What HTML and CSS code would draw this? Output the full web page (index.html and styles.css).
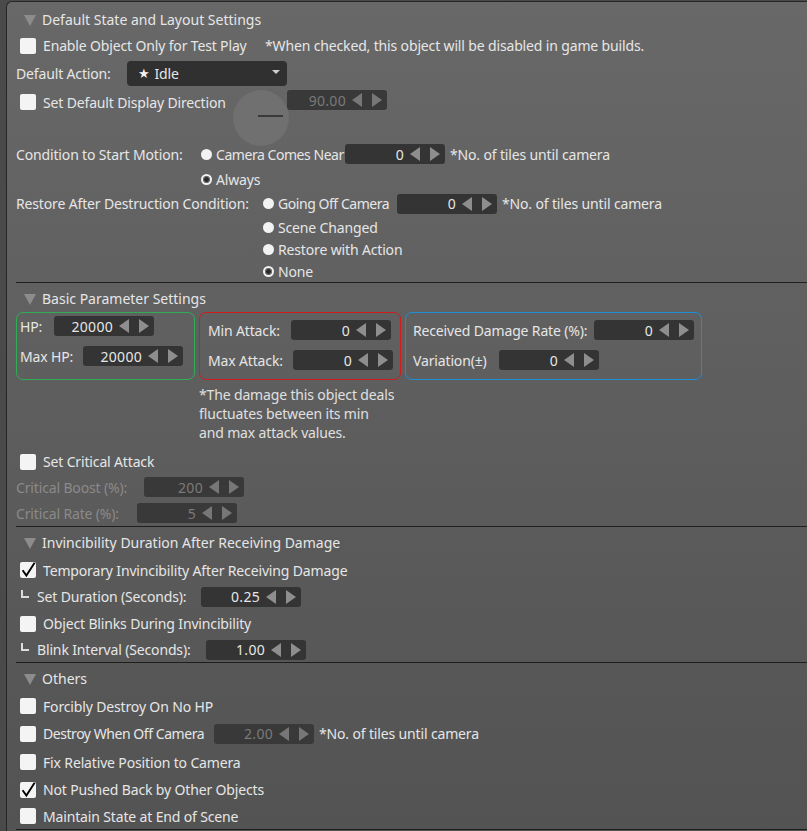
FILE: index.html
```html
<!DOCTYPE html>
<html>
<head>
<meta charset="utf-8">
<title>Object Settings</title>
<link rel="stylesheet" href="styles.css">
</head>
<body>
<div class="panel">

  <section class="sec">
    <div class="head"><span class="tri"></span>Default State and Layout Settings</div>

    <div class="row h23">
      <div class="chk w249"><span class="cb"></span>Enable Object Only for Test Play</div>
      <span>*When checked, this object will be disabled in game builds.</span>
    </div>

    <div class="row h32">
      <div class="lbl w111">Default Action:</div>
      <div class="select"><span class="star">★</span><span>Idle</span><span class="caret"></span></div>
    </div>

    <div class="row dir">
      <div class="chk w217 h26"><span class="cb"></span>Set Default Display Direction</div>
      <div class="dial"></div>
      <div class="spin off dir-spin"><span class="val">90.00</span><svg width="30" height="14" viewBox="0 0 30 14"><polygon points="10,0 10,14 0,7"/><polygon points="20,0 20,14 30,7"/></svg></div>
    </div>

    <div class="choice">
      <div class="lbl w185 h26">Condition to Start Motion:</div>
      <div class="opts">
        <div class="opt h26"><span class="radio"></span><span class="lbl w129 tight">Camera Comes Near</span><div class="spin"><span class="val">0</span><svg width="30" height="14" viewBox="0 0 30 14"><polygon points="10,0 10,14 0,7"/><polygon points="20,0 20,14 30,7"/></svg></div><span class="after">*No. of tiles until camera</span></div>
        <div class="opt h24"><span class="radio on"></span>Always</div>
      </div>
    </div>

    <div class="choice">
      <div class="lbl w247 h25">Restore After Destruction Condition:</div>
      <div class="opts">
        <div class="opt h25"><span class="radio"></span><span class="lbl w119 tight">Going Off Camera</span><div class="spin"><span class="val">0</span><svg width="30" height="14" viewBox="0 0 30 14"><polygon points="10,0 10,14 0,7"/><polygon points="20,0 20,14 30,7"/></svg></div><span class="after">*No. of tiles until camera</span></div>
        <div class="opt h22"><span class="radio"></span>Scene Changed</div>
        <div class="opt h22"><span class="radio"></span>Restore with Action</div>
        <div class="opt h22"><span class="radio on"></span>None</div>
      </div>
    </div>
  </section>
  <div class="sep"></div>

  <section class="sec">
    <div class="head"><span class="tri"></span>Basic Parameter Settings</div>

    <div class="groups">
      <div class="group green">
        <div class="grow"><span class="lbl w34">HP:</span><div class="spin"><span class="val">20000</span><svg width="30" height="14" viewBox="0 0 30 14"><polygon points="10,0 10,14 0,7"/><polygon points="20,0 20,14 30,7"/></svg></div></div>
        <div class="grow"><span class="lbl w63">Max HP:</span><div class="spin"><span class="val">20000</span><svg width="30" height="14" viewBox="0 0 30 14"><polygon points="10,0 10,14 0,7"/><polygon points="20,0 20,14 30,7"/></svg></div></div>
      </div>
      <div class="group red">
        <div class="grow"><span class="lbl w83">Min Attack:</span><div class="spin"><span class="val">0</span><svg width="30" height="14" viewBox="0 0 30 14"><polygon points="10,0 10,14 0,7"/><polygon points="20,0 20,14 30,7"/></svg></div></div>
        <div class="grow"><span class="lbl w85">Max Attack:</span><div class="spin"><span class="val">0</span><svg width="30" height="14" viewBox="0 0 30 14"><polygon points="10,0 10,14 0,7"/><polygon points="20,0 20,14 30,7"/></svg></div></div>
      </div>
      <div class="group blue">
        <div class="grow"><span class="lbl w181">Received Damage Rate (%):</span><div class="spin"><span class="val">0</span><svg width="30" height="14" viewBox="0 0 30 14"><polygon points="10,0 10,14 0,7"/><polygon points="20,0 20,14 30,7"/></svg></div></div>
        <div class="grow"><span class="lbl w86">Variation(±)</span><div class="spin"><span class="val">0</span><svg width="30" height="14" viewBox="0 0 30 14"><polygon points="10,0 10,14 0,7"/><polygon points="20,0 20,14 30,7"/></svg></div></div>
      </div>
    </div>

    <p class="note">*The damage this object deals<br>fluctuates between its min<br>and max attack values.</p>

    <div class="row h25">
      <div class="chk"><span class="cb"></span>Set Critical Attack</div>
    </div>
    <div class="row h26 disabled">
      <span class="lbl w128">Critical Boost (%):</span>
      <div class="spin off"><span class="val">200</span><svg width="30" height="14" viewBox="0 0 30 14"><polygon points="10,0 10,14 0,7"/><polygon points="20,0 20,14 30,7"/></svg></div>
    </div>
    <div class="row h26 disabled">
      <span class="lbl w121">Critical Rate (%):</span>
      <div class="spin off"><span class="val">5</span><svg width="30" height="14" viewBox="0 0 30 14"><polygon points="10,0 10,14 0,7"/><polygon points="20,0 20,14 30,7"/></svg></div>
    </div>
  </section>
  <div class="sep"></div>

  <section class="sec">
    <div class="head"><span class="tri"></span>Invincibility Duration After Receiving Damage</div>

    <div class="row h26">
      <div class="chk"><span class="cb"><svg width="16" height="16" viewBox="0 0 16 16"><path d="M2.6 8.2 L6.4 13.6 L14.6 0.8"/></svg></span>Temporary Invincibility After Receiving Damage</div>
    </div>
    <div class="row h27">
      <span class="lbl w185"><span class="corner"></span>Set Duration (Seconds):</span>
      <div class="spin"><span class="val">0.25</span><svg width="30" height="14" viewBox="0 0 30 14"><polygon points="10,0 10,14 0,7"/><polygon points="20,0 20,14 30,7"/></svg></div>
    </div>
    <div class="row h27">
      <div class="chk"><span class="cb"></span>Object Blinks During Invincibility</div>
    </div>
    <div class="row h25">
      <span class="lbl w190"><span class="corner"></span>Blink Interval (Seconds):</span>
      <div class="spin"><span class="val">1.00</span><svg width="30" height="14" viewBox="0 0 30 14"><polygon points="10,0 10,14 0,7"/><polygon points="20,0 20,14 30,7"/></svg></div>
    </div>
  </section>
  <div class="sep"></div>

  <section class="sec">
    <div class="head"><span class="tri"></span>Others</div>

    <div class="row h26">
      <div class="chk"><span class="cb"></span>Forcibly Destroy On No HP</div>
    </div>
    <div class="row h29">
      <div class="chk w198 tight"><span class="cb"></span>Destroy When Off Camera</div>
      <div class="spin off"><span class="val">2.00</span><svg width="30" height="14" viewBox="0 0 30 14"><polygon points="10,0 10,14 0,7"/><polygon points="20,0 20,14 30,7"/></svg></div>
      <span class="after">*No. of tiles until camera</span>
    </div>
    <div class="row h28">
      <div class="chk"><span class="cb"></span>Fix Relative Position to Camera</div>
    </div>
    <div class="row h27">
      <div class="chk"><span class="cb"><svg width="16" height="16" viewBox="0 0 16 16"><path d="M2.6 8.2 L6.4 13.6 L14.6 0.8"/></svg></span>Not Pushed Back by Other Objects</div>
    </div>
    <div class="row h26">
      <div class="chk"><span class="cb"></span>Maintain State at End of Scene</div>
    </div>
  </section>
  <div class="sep"></div>

</div>
</body>
</html>
```

FILE: styles.css
```css
html, body {
  margin: 0;
  padding: 0;
}

body {
  width: 807px;
  height: 831px;
  overflow: hidden;
  background: #4a4a4a;
  font-family: "Noto Sans", "Open Sans", "DejaVu Sans", sans-serif;
  font-size: 14px;
  letter-spacing: -0.15px;
  color: #e6e6e6;
}

.panel {
  box-sizing: border-box;
  margin: 1px 0 0 6px;
  height: 830px;
  padding: 2px 0 0 9px;
  border-top: 1px solid #262626;
  border-left: 1px solid #262626;
  border-top-left-radius: 6px;
  background: linear-gradient(#686868, #535353);
}

.head {
  height: 30px;
  display: flex;
  align-items: center;
  padding-left: 8px;
  white-space: nowrap;
  letter-spacing: 0;
}

.tri {
  width: 0;
  height: 0;
  border-left: 6px solid transparent;
  border-right: 6px solid transparent;
  border-top: 11px solid #8c8c8c;
  margin: 2px 6px 0 0;
}

.sep {
  height: 1px;
  background: #1e1e1e;
}

.row {
  display: flex;
  align-items: center;
  white-space: nowrap;
}

.h22 { height: 22px; }
.h23 { height: 23px; }
.h24 { height: 24px; }
.h25 { height: 25px; }
.h26 { height: 26px; }
.h27 { height: 27px; }
.h28 { height: 28px; }
.h29 { height: 29px; }
.h32 { height: 32px; }

.w34 { min-width: 34px; }
.w63 { min-width: 63px; }
.w83 { min-width: 83px; }
.w85 { min-width: 85px; }
.w86 { min-width: 86px; }
.w111 { min-width: 111px; }
.w119 { min-width: 119px; }
.w121 { min-width: 121px; }
.w128 { min-width: 128px; }
.w129 { min-width: 129px; }
.w181 { min-width: 181px; }
.w185 { min-width: 185px; }
.w190 { min-width: 190px; }
.w198 { min-width: 198px; }
.w217 { min-width: 217px; }
.w247 { min-width: 247px; }
.w249 { min-width: 249px; }

.tight {
  letter-spacing: -0.45px;
}

.lbl {
  display: flex;
  align-items: center;
  flex: none;
  white-space: nowrap;
}

.chk {
  display: flex;
  align-items: center;
  flex: none;
  white-space: nowrap;
}

.cb {
  width: 16px;
  height: 16px;
  flex: none;
  background: #f4f4f4;
  border-radius: 2px;
  margin: 0 7px 0 4px;
}

.cb svg {
  display: block;
  overflow: visible;
}

.cb path {
  fill: none;
  stroke: #000;
  stroke-width: 1.9;
  stroke-linejoin: miter;
}

.radio {
  width: 11px;
  height: 11px;
  flex: none;
  border-radius: 50%;
  background: #f2f2f2;
  margin-right: 4px;
}

.radio.on {
  background: radial-gradient(circle, #2a2a2a 0 2px, #6e6e6e 2.6px 3.4px, #f2f2f2 4px);
}

.select {
  box-sizing: border-box;
  width: 160px;
  height: 25px;
  display: flex;
  align-items: center;
  padding: 0 7px 0 11px;
  background: #303030;
  border-radius: 4px;
}

.star {
  font-family: "DejaVu Sans", sans-serif;
  font-size: 13px;
  margin-right: 5px;
  color: #f2f2f2;
}

.caret {
  margin-left: auto;
  width: 0;
  height: 0;
  border-left: 4px solid transparent;
  border-right: 4px solid transparent;
  border-top: 4px solid #d0d0d0;
  margin-top: -2px;
}

.spin {
  width: 100px;
  height: 20px;
  flex: none;
  display: flex;
  align-items: center;
  background: #343434;
  border-radius: 3px;
  letter-spacing: 0.3px;
}

.spin .val {
  width: 59px;
  text-align: right;
}

.spin svg {
  display: block;
  margin-left: 6px;
  fill: #8e8e8e;
}

.spin.off {
  background: #393939;
}

.spin.off .val {
  color: #7a7a7a;
}

.spin.off svg {
  fill: #777;
}

.dir {
  height: 52px;
  align-items: flex-start;
}

.dial {
  position: relative;
  width: 56px;
  height: 56px;
  flex: none;
  margin-top: 1px;
  border-radius: 50%;
  background: #707070;
}

.dial::after {
  content: "";
  position: absolute;
  left: 25px;
  top: 25px;
  width: 25px;
  height: 2px;
  background: #3a3a3a;
}

.dir-spin {
  margin: 1px 0 0 -2px;
}

.choice {
  display: flex;
  align-items: flex-start;
  white-space: nowrap;
}

.opts {
  display: flex;
  flex-direction: column;
}

.opt {
  display: flex;
  align-items: center;
}

.after {
  margin-left: 5px;
}

.groups {
  display: flex;
  gap: 4px;
  margin-top: -1px;
}

.group {
  box-sizing: border-box;
  height: 68px;
  border: 1px solid;
  border-radius: 7px;
  display: flex;
  flex-direction: column;
  gap: 10px;
  white-space: nowrap;
}

.group.green {
  width: 179px;
  border-color: #2fae55;
  padding: 3px 0 0 3px;
}

.group.red {
  width: 202px;
  border-color: #d21c1c;
  padding: 7px 0 0 8px;
}

.group.blue {
  width: 297px;
  border-color: #1d8fd6;
  padding: 7px 0 0 7px;
}

.grow {
  display: flex;
  align-items: center;
  height: 20px;
}

.note {
  margin: 5px 0 7px 183px;
  line-height: 19px;
  color: #e0e0e0;
}

.disabled .lbl {
  color: #8a8a8a;
}

.corner {
  width: 6px;
  height: 6px;
  flex: none;
  border-left: 2px solid #dcdcdc;
  border-bottom: 2px solid #dcdcdc;
  margin: -5px 8px 0 5px;
}
```
